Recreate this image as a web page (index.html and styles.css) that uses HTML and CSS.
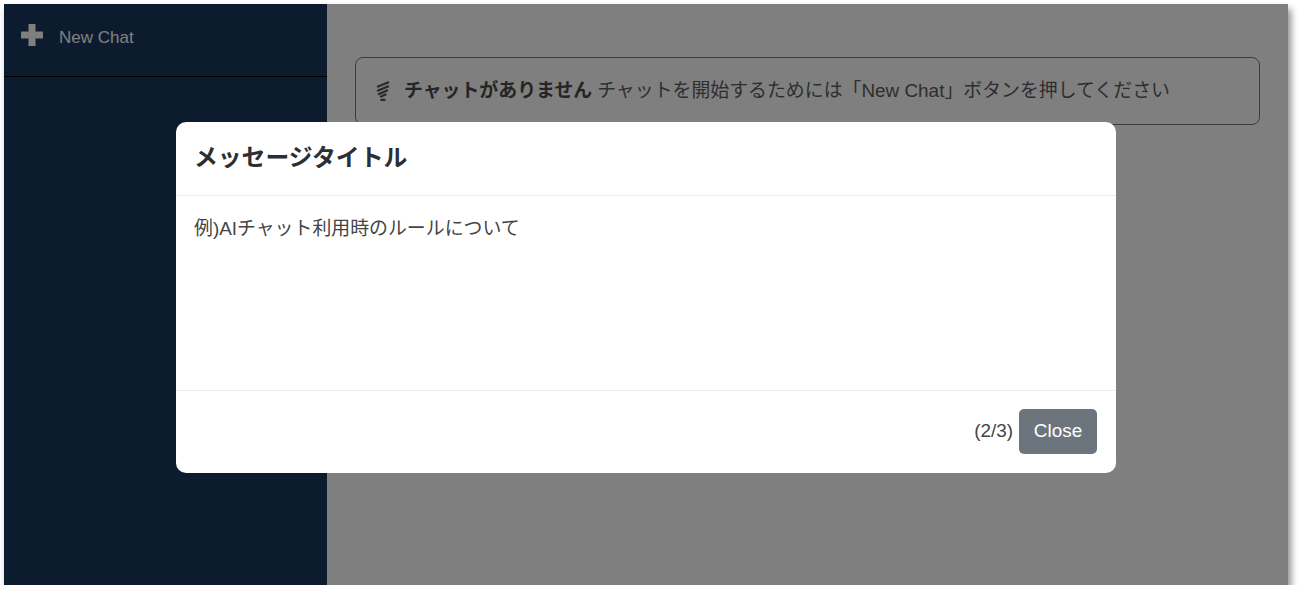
FILE: index.html
```html
<!DOCTYPE html>
<html lang="ja">
<head>
  <meta charset="UTF-8" />
  <meta name="viewport" content="width=device-width, initial-scale=1.0" />
  <title>Chat</title>
  <link rel="stylesheet" href="styles.css">
</head>
<body>
  <div class="app">
    <div class="sidebar">
      <div class="new-chat">
        <svg class="plus-icon" viewBox="0 0 22 22" width="22" height="22">
          <path d="M7.500 0h7v7.500h7.500v7h-7.500V22h-7v-7.500H0v-7h7.500z" fill="#fff" />
        </svg>
        <span>New Chat</span>
      </div>
    </div>
    <div class="main">
      <div class="alert">
        <svg class="alert-icon" viewBox="0 0 14 20" width="14" height="20">
          <path d="M2 5.500 12 1.500M2 9.500 12 5.500M3 13 11 9.500M5 15.500 9.500 13.500M5.500 19h3" fill="none" stroke="#555" stroke-width="2.400" stroke-linecap="round" />
        </svg>
        <strong>チャットがありません</strong>
        <span>チャットを開始するためには「New Chat」ボタンを押してください</span>
      </div>
    </div>

    <!-- モーダル -->
    <div class="overlay">
      <div class="modal">
        <div class="modal-header">
          <h2>メッセージタイトル</h2>
        </div>
        <div class="modal-body">例)AIチャット利用時のルールについて</div>
        <div class="modal-footer">
          <span class="pager">(2/3)</span>
          <button class="close-btn">Close</button>
        </div>
      </div>
    </div>
  </div>
</body>
</html>
```

FILE: styles.css
```css
* {
  box-sizing: border-box;
}

body {
  margin: 0;
  padding: 4px 0 0 4px;
  background: #fff;
  font-family: "Liberation Sans", "Noto Sans CJK JP", sans-serif;
  color: #212529;
}

.app {
  position: relative;
  width: 1284px;
  height: 581px;
  display: flex;
  background: #fff;
  box-shadow: 3px 5px 7px rgba(0, 0, 0, 0.45);
}

.sidebar {
  width: 323px;
  background: #18365c;
}

.new-chat {
  height: 73px;
  padding: 0 0 11px 17px;
  display: flex;
  align-items: center;
  gap: 16px;
  border-bottom: 1px solid #000;
  color: #fff;
  font-size: 17px;
}

.new-chat span {
  padding-top: 7px;
}

.main {
  flex: 1;
  padding: 53px 28px 0 28px;
}

.alert {
  height: 68px;
  padding: 0 18px 6px 20px;
  display: flex;
  align-items: center;
  gap: 5px;
  border: 1px solid #777;
  border-radius: 8px;
  font-size: 18.9px;
  color: #5c5c5c;
}

.alert strong {
  color: #4a4a4a;
}

.alert-icon {
  margin: 6px 9px 0 0;
}

.overlay {
  position: absolute;
  inset: 0;
  padding-top: 118px;
  display: flex;
  justify-content: center;
  align-items: flex-start;
  background: rgba(0, 0, 0, 0.5);
}

.modal {
  width: 940px;
  height: 351px;
  display: flex;
  flex-direction: column;
  background: #fff;
  border-radius: 10px;
}

.modal-header {
  height: 74px;
  padding: 0 18px 6px;
  display: flex;
  align-items: center;
  border-bottom: 1px solid #e9ecef;
}

.modal-header h2 {
  margin: 0;
  font-size: 23.800px;
  font-weight: bold;
  color: #2b2f33;
}

.modal-body {
  flex: 1;
  padding: 17px 18px;
  font-size: 18.9px;
  color: #444;
}

.modal-footer {
  height: 83px;
  padding: 0 19px 2px;
  display: flex;
  justify-content: flex-end;
  align-items: center;
  gap: 6px;
  border-top: 1px solid #e9ecef;
  font-size: 18.9px;
  color: #444;
}

.close-btn {
  width: 78px;
  height: 45px;
  border: none;
  border-radius: 5px;
  background: #6c757d;
  color: #fff;
  font-family: inherit;
  font-size: 18.9px;
}
```
